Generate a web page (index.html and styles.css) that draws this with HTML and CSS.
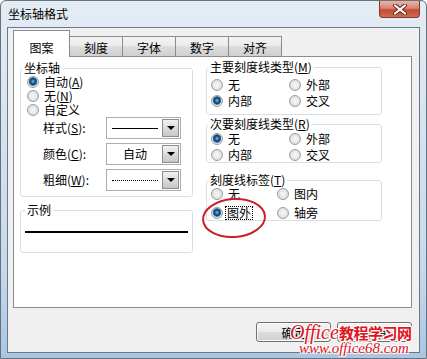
FILE: index.html
```html
<!DOCTYPE html>
<html lang="zh-CN">
<head>
    <meta charset="UTF-8">
    <title>坐标轴格式</title>
    <link rel="stylesheet" href="styles.css">
</head>
<body>
    <div class="window">
        <div class="titlebar">
            <span class="title">坐标轴格式</span>
            <button type="button" class="close">
                <svg width="14" height="11" viewBox="0 0 14 11">
                    <path d="M2 1.5 L12 9.5 M12 1.5 L2 9.5" stroke="#5a2a22" stroke-width="4" stroke-linecap="round"/>
                    <path d="M2 1.5 L12 9.5 M12 1.5 L2 9.5" stroke="#fff" stroke-width="2.2" stroke-linecap="round"/>
                </svg>
            </button>
        </div>

        <div class="client">
            <div class="tabs">
                <span class="tab active">图案</span>
                <span class="tab">刻度</span>
                <span class="tab">字体</span>
                <span class="tab">数字</span>
                <span class="tab">对齐</span>
            </div>

            <div class="panel">
                <div class="col col-left">
                    <fieldset class="group axis">
                        <legend>坐标轴</legend>
                        <div class="body">
                            <label class="radio on"><i></i>自动(<u>A</u>)</label>
                            <label class="radio"><i></i>无(<u>N</u>)</label>
                            <label class="radio"><i></i>自定义</label>
                            <div class="field">
                                <span class="lbl">样式(<u>S</u>):</span>
                                <div class="combo"><span class="val"><b class="line"></b></span><span class="drop"></span></div>
                            </div>
                            <div class="field">
                                <span class="lbl">颜色(<u>C</u>):</span>
                                <div class="combo"><span class="val">自动</span><span class="drop"></span></div>
                            </div>
                            <div class="field">
                                <span class="lbl">粗细(<u>W</u>):</span>
                                <div class="combo"><span class="val"><b class="line dotted"></b></span><span class="drop"></span></div>
                            </div>
                        </div>
                    </fieldset>

                    <fieldset class="group sample">
                        <legend>示例</legend>
                        <div class="sample-line"></div>
                    </fieldset>
                </div>

                <div class="col col-right">
                    <fieldset class="group major">
                        <legend>主要刻度线类型(<u>M</u>)</legend>
                        <div class="body grid">
                            <label class="radio"><i></i>无</label>
                            <label class="radio"><i></i>外部</label>
                            <label class="radio on"><i></i>内部</label>
                            <label class="radio"><i></i>交叉</label>
                        </div>
                    </fieldset>

                    <fieldset class="group minor">
                        <legend>次要刻度线类型(<u>R</u>)</legend>
                        <div class="body grid">
                            <label class="radio on"><i></i>无</label>
                            <label class="radio"><i></i>外部</label>
                            <label class="radio"><i></i>内部</label>
                            <label class="radio"><i></i>交叉</label>
                        </div>
                    </fieldset>

                    <fieldset class="group labels">
                        <legend>刻度线标签(<u>T</u>)</legend>
                        <div class="body grid narrow">
                            <label class="radio"><i></i>无</label>
                            <label class="radio"><i></i>图内</label>
                            <label class="radio on"><i></i><span class="focus">图外</span></label>
                            <label class="radio"><i></i>轴旁</label>
                        </div>
                    </fieldset>
                </div>
            </div>

            <div class="buttons">
                <button type="button" class="btn">确定</button>
                <button type="button" class="btn">取消</button>
            </div>
        </div>

        <!-- red mark drawn over the screenshot -->
        <svg class="mark" width="66" height="44" viewBox="0 0 66 44">
            <ellipse cx="33" cy="22" rx="31" ry="19" transform="rotate(-4 33 22)" fill="none" stroke="#cc1f2b" stroke-width="2"/>
        </svg>

        <div class="watermark">
            <div class="wm-top"><i>Office</i><b>教程学习网</b></div>
            <div class="wm-url">www.office68.com</div>
        </div>
    </div>
</body>
</html>
```

FILE: styles.css
```css
* {
    box-sizing: border-box;
}
body {
    margin: 0;
    font-family: "Noto Sans CJK SC", "Liberation Sans", sans-serif;
    font-size: 12px;
    line-height: 14px;
    color: #000;
}
u {
    text-decoration: underline;
}

/* window frame */
.window {
    position: relative;
    width: 427px;
    height: 359px;
    border: 1px solid #66727f;
    border-radius: 6px 6px 0 0;
    background: linear-gradient(180deg, #e4ecf4 0%, #d6e3ef 35%, #c6d9ec 75%, #a9c6e3 100%);
    overflow: hidden;
}
.titlebar {
    display: flex;
    align-items: flex-start;
    height: 26px;
    padding-left: 7px;
}
.title {
    flex: 1;
    line-height: 26px;
}
.close {
    width: 41px;
    height: 17px;
    margin: 0 6px 0 0;
    padding: 0;
    display: flex;
    align-items: center;
    justify-content: center;
    border: 1px solid #7a3a30;
    border-top: none;
    border-radius: 0 0 4px 4px;
    background: linear-gradient(180deg, #eab3a6 0%, #d98472 45%, #c54a30 55%, #d36a4e 100%);
}

.client {
    height: 326px;
    margin: 0 6px;
    padding: 2px 0 0 5px;
    border: 1px solid #6c7886;
    background: #f0f0f0;
}

/* tabs */
.tabs {
    display: flex;
    align-items: flex-end;
    height: 26px;
}
.tab {
    width: 54px;
    height: 20px;
    margin-left: -1px;
    padding-top: 4px;
    text-align: center;
    border: 1px solid #898c95;
    border-bottom: none;
    background: linear-gradient(180deg, #f3f3f3 0%, #ebebeb 50%, #dddddd 50%, #cfcfcf 100%);
}
.tab.active {
    position: relative;
    z-index: 1;
    width: 57px;
    height: 27px;
    margin: 0 0 -1px 0;
    padding-top: 10px;
    background: #fff;
}

.panel {
    display: flex;
    gap: 13px;
    width: 399px;
    height: 252px;
    padding: 4px 0 0 6px;
    border: 1px solid #898c95;
    background: #fff;
}
.col-left {
    width: 173px;
}
.col-right {
    width: 176px;
    margin-top: -1px;
}

/* group boxes */
.group {
    margin: 0;
    padding: 0 0 0 1px;
    min-width: 0;
    border: 1px solid #d5dfe5;
    border-radius: 3px;
}
.group legend {
    padding: 0 2px;
}
.body {
    padding-left: 5px;
}
.axis {
    padding-bottom: 5px;
}
.radio {
    display: flex;
    align-items: center;
    height: 14px;
    white-space: nowrap;
}
.radio i {
    flex: none;
    width: 12px;
    height: 12px;
    margin-right: 5px;
    border: 1px solid #9a9da2;
    border-radius: 50%;
    background: radial-gradient(circle, #f6f6f6 0, #e9e9e9 45%, #cfd1d4 100%);
}
.radio.on i {
    background: radial-gradient(circle at 50% 45%, #8fc3ea 0, #2d6fa8 1.6px, #123f68 3px, #3f7fb5 4px, #d9dde2 4.6px, #eef0f2 100%);
}

.field {
    display: flex;
    align-items: center;
    height: 22px;
    margin-top: 4px;
    padding-left: 16px;
}
.radio + .field {
    margin-top: 0;
}
.lbl {
    width: 63px;
    white-space: nowrap;
}
.combo {
    display: flex;
    width: 75px;
    height: 22px;
    padding: 1px;
    border: 1px solid #abadb3;
    background: #fff;
}
.val {
    flex: 1;
    display: flex;
    align-items: center;
    justify-content: center;
}
.line {
    display: block;
    width: 46px;
    border-top: 1px solid #000;
}
.line.dotted {
    border-top-style: dotted;
}
.drop {
    width: 17px;
    display: flex;
    align-items: center;
    justify-content: center;
    border: 1px solid #8d8d8d;
    background: linear-gradient(180deg, #f2f2f2 0%, #dcdcdc 50%, #c6c6c6 100%);
}
.drop::after {
    content: "";
    border-left: 4px solid transparent;
    border-right: 4px solid transparent;
    border-top: 4px solid #000;
}

.sample {
    margin-top: 6px;
    padding: 14px 4px 19px 4px;
}
.sample-line {
    height: 2px;
    background: #000;
}

/* right column */
.grid {
    display: grid;
    grid-template-columns: 78px 1fr;
    row-gap: 2px;
    padding-left: 3px;
}
.grid.narrow {
    grid-template-columns: 66px 1fr;
    row-gap: 5px;
}
.major {
    padding-top: 2px;
    padding-bottom: 6px;
}
.major .grid {
    padding-top: 2px;
}
.minor {
    margin-top: 2px;
}
.minor .grid {
    padding-top: 1px;
}
.labels {
    margin-top: 10px;
}
.focus {
    margin-left: -3px;
    padding: 0 2px;
    outline: 1px dotted #000;
    outline-offset: -1px;
}

/* buttons */
.buttons {
    display: flex;
    justify-content: flex-end;
    gap: 6px;
    margin-top: 14px;
    padding-right: 7px;
}
.btn {
    width: 75px;
    height: 20px;
    padding: 0;
    font-family: inherit;
    font-size: 12px;
    border: 1px solid #707070;
    border-radius: 3px;
    background: linear-gradient(180deg, #f2f2f2 0%, #ebebeb 50%, #dddddd 50%, #cfcfcf 100%);
    box-shadow: inset 0 0 0 1px #fcfcfc;
}

/* overlays */
.mark {
    position: absolute;
    left: 200px;
    top: 195px;
}
.watermark {
    position: absolute;
    left: 289px;
    top: 321px;
    color: #e0141e;
    text-shadow: 1px 1px 0 #fff, -1px -1px 0 #fff, 1px -1px 0 #fff, -1px 1px 0 #fff;
}
.wm-top {
    display: flex;
    align-items: baseline;
    height: 20px;
    white-space: nowrap;
}
.wm-top i {
    font-family: "Liberation Serif", serif;
    font-size: 20px;
    line-height: 20px;
}
.wm-top b {
    font-size: 15px;
    letter-spacing: -0.5px;
}
.wm-url {
    margin: -2px 0 0 9px;
    font-family: "Liberation Serif", serif;
    font-style: italic;
    font-size: 15px;
    line-height: 16px;
    white-space: nowrap;
}
```
